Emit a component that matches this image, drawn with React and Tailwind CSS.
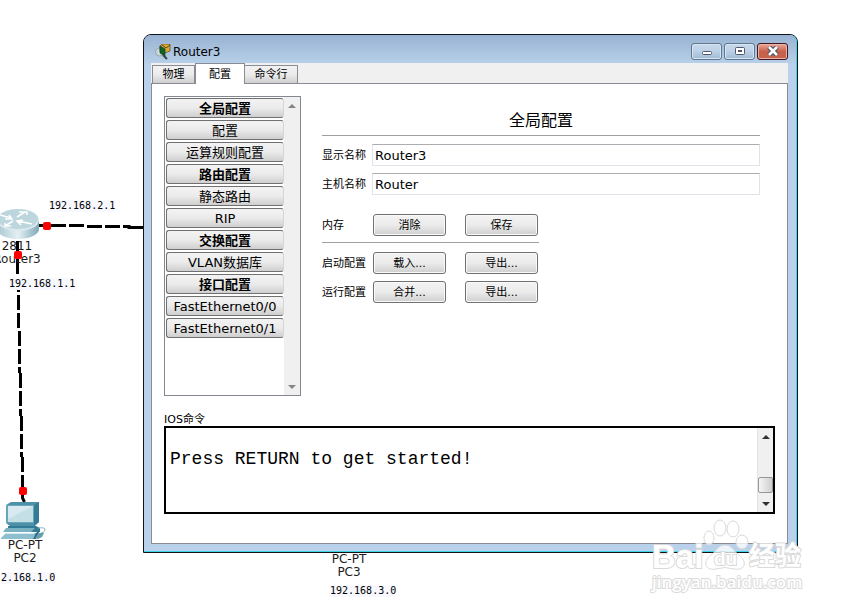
import { useState } from "react";

const SECTIONS = [
  { label: "全局配置", header: true },
  { label: "配置" },
  { label: "运算规则配置" },
  { label: "路由配置", header: true },
  { label: "静态路由" },
  { label: "RIP" },
  { label: "交换配置", header: true },
  { label: "VLAN数据库" },
  { label: "接口配置", header: true },
  { label: "FastEthernet0/0" },
  { label: "FastEthernet0/1" },
];

const FONT = "font-['DejaVu_Sans','Noto_Sans_CJK_SC',sans-serif]";

function Links() {
  return (
    <svg className="absolute left-0 top-0" width="150" height="510" aria-hidden="true">
      <g fill="none" stroke="#000" strokeWidth="3">
        <path d="M39 225.500H66M69 225.500H84M87 226.500H102M105 226.500H120M123 226.500H129V227.500H144" />
        <path d="M17.500 241V274M18.500 289V292" />
        <path d="M18.500 295V328M19.500 331V373M20.500 373V416M21.500 416V457M22.500 457V480" strokeDasharray="15 3" />
        <path d="M22.500 475V498L24.500 502" />
      </g>
    </svg>
  );
}

function Dots() {
  return (
    <svg className="absolute left-0 top-0" width="60" height="510" aria-hidden="true">
      <g fill="#f00">
        <rect x="43" y="222" width="8" height="8" rx="2" />
        <rect x="14" y="251" width="8" height="8" rx="2" />
        <rect x="19" y="487" width="8" height="8" rx="2" />
      </g>
    </svg>
  );
}

function RouterIcon() {
  return (
    <svg className="absolute left-0 top-[208px]" width="40" height="32" viewBox="0 0 40 32" aria-hidden="true">
      <defs>
        <linearGradient id="routerSide" x1="0" x2="1">
          <stop offset="0" stopColor="#a9c6d0" />
          <stop offset=".5" stopColor="#e4f0f4" />
          <stop offset="1" stopColor="#7fa9b8" />
        </linearGradient>
      </defs>
      <path d="M-3 12V21C-3 27 7 31 18 31S39 27 39 21V12Z" fill="url(#routerSide)" />
      <ellipse cx="18" cy="12" rx="21" ry="11" fill="#dbe9ee" />
      <ellipse cx="18" cy="11" rx="20" ry="10" fill="#bdd6de" />
      <g fill="none" stroke="#fff" strokeWidth="1.500">
        <path d="M0 7L11 10M9 7L12 11L5 11M17 9L25 4M19 4H27V7M18 13L32 16M23 12L17 13L21 17M13 13L5 18M5 15V18H11" />
      </g>
    </svg>
  );
}

function PcIcon() {
  return (
    <svg className="absolute left-0 top-[501px]" width="47" height="39" viewBox="0 0 47 39" aria-hidden="true">
      <path d="M6 4L11 1H39V21L35 25H10L6 22Z" fill="#4d91a8" />
      <path d="M6 4H34V22H6Z" fill="#68a6b9" />
      <rect x="8" y="5" width="25" height="16" fill="#c5dfe7" />
      <path d="M8 5H33L8 18Z" fill="#d8eaf0" />
      <path d="M34 4L39 1V21L34 24Z" fill="#367b94" />
      <path d="M8 25H36L40 27V31H8Z" fill="#337b94" />
      <path d="M6 27H35L31 31H3Z" fill="#79b2c2" />
      <path d="M1 37L6 32H37L33 38H1Z" fill="#8dbfce" />
      <path d="M6 32.500H34" stroke="#d8ebf0" />
      <path d="M36 32L40 29L36 38H33Z" fill="#286e87" />
      <path d="M38 27Q46 26 45 29T41 32" fill="none" stroke="#8ab6c4" />
      <path d="M35 37L39 32H44L42 36L38 38Z" fill="#669eae" />
    </svg>
  );
}

function AppIcon() {
  return (
    <svg width="16" height="16" viewBox="0 0 16 16" aria-hidden="true">
      <circle cx="4.500" cy="8" r="4" fill="#c9d8dc" stroke="#95a8b0" />
      <path d="M5 2L7 0H15V7L10 9L5 7Z" fill="#d9a93c" stroke="#5b4612" strokeWidth=".7" />
      <path d="M7 1L11 4L15 1" stroke="#5b4612" fill="none" />
      <path d="M5 2L10 5V12L5 9Z" fill="#0c6524" stroke="#123d1c" strokeWidth=".7" />
      <path d="M8 11L12 15" stroke="#36434a" strokeWidth="2" />
    </svg>
  );
}

function Label({ className, children }) {
  return (
    <span className={`absolute whitespace-pre bg-[#f8f8ff] font-['DejaVu_Sans_Mono',monospace] text-[10px] leading-3 ${className}`}>
      {children}
    </span>
  );
}

function Device({ className, model, name }) {
  return (
    <div className={`absolute w-16 text-center text-xs leading-[13px] text-[#1c1c1c] ${className}`}>
      <div>{model}</div>
      <div>{name}</div>
    </div>
  );
}

function Arrow({ down, light }) {
  return (
    <button aria-label={down ? "向下滚动" : "向上滚动"} className="flex h-[17px] w-full items-center justify-center">
      <svg width="8" height="4" viewBox="0 0 8 4" aria-hidden="true">
        <path d={down ? "M0 0H8L4 4Z" : "M0 4H8L4 0Z"} fill={light ? "#858585" : "#303030"} />
      </svg>
    </button>
  );
}

function PushButton({ children, label }) {
  return (
    <button
      aria-label={label}
      className="h-[22px] w-[73px] rounded-[3px] border border-[#707070] bg-linear-to-b from-[#f3f3f3] from-0% via-[#ebebeb] via-50% to-[#cfcfcf] pt-px text-[11px] leading-5 shadow-[inset_0_0_0_1px_#fafafa]"
    >
      {children}
    </button>
  );
}

function ActionRow({ title, first, second }) {
  return (
    <div className="flex h-[22px] items-center">
      <span className="w-[51px] pt-0.5 text-[11px]">{title}</span>
      <div className="flex gap-[19px]">
        <PushButton label={`${title} ${first}`}>{first}</PushButton>
        <PushButton label={`${title} ${second}`}>{second}</PushButton>
      </div>
    </div>
  );
}

function Field({ id, title, initial }) {
  const [value, setValue] = useState(initial);
  return (
    <div className="flex h-[22px] items-center">
      <label htmlFor={id} className="w-[50px] shrink-0 pt-0.5 text-[11px]">{title}</label>
      <input
        id={id}
        value={value}
        onChange={(e) => setValue(e.target.value)}
        className="h-[22px] min-w-0 flex-1 border border-[#e2e3ea] border-t-[#abadb3] bg-white px-0.5 text-[13px] outline-none"
      />
    </div>
  );
}

function WindowButtons() {
  const glass = "flex h-[17px] w-[31px] items-center justify-center rounded-[3px] border border-[#5f7590] bg-linear-to-b from-[#c8d9eb] from-0% via-[#bdd1e7] via-45% to-[#9fbad6] shadow-[inset_0_0_0_1px_#d9e7f4]";
  return (
    <div className="flex gap-0.5 pt-1">
      <button aria-label="最小化" className={glass}>
        <svg width="12" height="12" aria-hidden="true">
          <rect x="1.500" y="6.500" width="9" height="3" rx="1" fill="#fff" stroke="#535666" />
        </svg>
      </button>
      <button aria-label="最大化" className={glass}>
        <svg width="12" height="12" aria-hidden="true">
          <rect x="1.500" y="2.500" width="9" height="7" rx="1" fill="#fff" stroke="#535666" />
          <rect x="4.500" y="5.500" width="3" height="1" fill="#8fb0d0" stroke="#535666" />
        </svg>
      </button>
      <button
        aria-label="关闭"
        className="flex h-[17px] w-[31px] items-center justify-center rounded-[3px] border border-[#431422] bg-linear-to-b from-[#e9a99c] from-0% via-[#c9604b] via-50% to-[#c4634c] shadow-[inset_0_0_0_1px_#e9b5a9]"
      >
        <svg width="12" height="10" aria-hidden="true">
          <path d="M2 1L10 9M10 1L2 9" stroke="#535666" strokeWidth="5" />
          <path d="M2 1L10 9M10 1L2 9" stroke="#fff" strokeWidth="2.500" />
        </svg>
      </button>
    </div>
  );
}

function Tabs() {
  const idle = "h-[18px] border border-b-0 border-[#898c95] bg-linear-to-b from-[#f2f2f2] from-0% via-[#ebebeb] via-50% to-[#cfcfcf] text-[11px] leading-4";
  return (
    <div role="tablist" className="flex h-5 items-end bg-[#f0f0f0] pl-px">
      <button role="tab" aria-selected="false" className={`w-[43px] pt-px ${idle}`}>物理</button>
      <button role="tab" aria-selected="true" className="z-10 -mb-px h-[21px] w-[50px] border border-b-0 border-[#898c95] bg-white pt-px text-[11px] leading-4">
        配置
      </button>
      <button role="tab" aria-selected="false" className={`w-[53px] border-l-0 pt-px ${idle}`}>命令行</button>
    </div>
  );
}

function SectionList() {
  return (
    <div className="flex h-[300px] w-[137px] shrink-0 border border-[#828790]">
      <ul className="flex min-w-0 flex-1 flex-col gap-0.5 pl-px pt-px">
        {SECTIONS.map((s) => (
          <li key={s.label} className="flex">
            <button
              className={`h-5 w-full whitespace-nowrap rounded-[3px] border border-[#707070] border-r-[#d5d5d5] bg-linear-to-b from-[#f3f3f3] from-0% via-[#ebebeb] via-50% to-[#cfcfcf] pt-px text-[13px] leading-[18px] ${s.header ? "font-bold" : ""}`}
            >
              {s.label}
            </button>
          </li>
        ))}
      </ul>
      <div className="flex w-4 flex-col justify-between bg-[#f0f0f0]">
        <Arrow light />
        <Arrow light down />
      </div>
    </div>
  );
}

function Terminal() {
  return (
    <div className="mt-4">
      <label htmlFor="ios" className="block h-[14px] text-[11px] leading-4">IOS命令</label>
      <div className="flex h-[88px] border-2 border-black">
        <textarea
          id="ios"
          defaultValue={"\nPress RETURN to get started!"}
          className="min-w-0 flex-1 resize-none overflow-hidden px-1 pt-px font-['Liberation_Mono',monospace] text-[18px] leading-5 outline-none"
        />
        <div className="flex w-4 flex-col border-l border-[#e3e3e3] bg-[#f0f0f0]">
          <Arrow />
          <div className="flex-1" />
          <div className="mb-0.5 h-4 rounded-[2px] border border-[#979797] bg-linear-to-r from-[#f5f5f5] to-[#cfcfcf]" />
          <Arrow down />
        </div>
      </div>
    </div>
  );
}

function RouterWindow() {
  return (
    <section className="absolute left-[143px] right-[52px] top-[34px] rounded-t-lg border border-[#101418] bg-[#b9d1ea]">
      <div className="rounded-t-[7px] border-b border-r border-[#3dd5ec] bg-linear-to-b from-[#98b3d2] from-0% to-[#b9d1ea] to-[30px] pb-[7px] pl-[7px] pr-2">
        <header className="flex h-7 items-center justify-between">
          <h1 className="flex items-center gap-0.5 pl-1 pt-1.5 text-xs">
            <AppIcon />
            Router3
          </h1>
          <WindowButtons />
        </header>
        <Tabs />
        <main className="border border-[#898c95] bg-white pb-[29px] pl-3 pr-3 pt-3">
          <div className="flex gap-[21px] pr-[15px]">
            <SectionList />
            <div className="min-w-0 flex-1">
              <h2 className="mt-2.5 h-[30px] border-b border-[#a0a0a0] text-center text-base leading-[30px]">全局配置</h2>
              <div className="mt-2 flex flex-col gap-[7px]">
                <Field id="display-name" title="显示名称" initial="Router3" />
                <Field id="host-name" title="主机名称" initial="Router" />
              </div>
              <div className="mt-[19px] w-[217px]">
                <ActionRow title="内存" first="消除" second="保存" />
                <hr className="mb-[9px] mt-[6px] border-[#a0a0a0]" />
                <div className="flex flex-col gap-[7px]">
                  <ActionRow title="启动配置" first="载入..." second="导出..." />
                  <ActionRow title="运行配置" first="合并..." second="导出..." />
                </div>
              </div>
            </div>
          </div>
          <Terminal />
        </main>
      </div>
    </section>
  );
}

function Watermark() {
  return (
    <svg className="pointer-events-none absolute left-[648px] top-[516px]" width="160" height="80" aria-hidden="true">
      <g fill="#fff" fillOpacity=".75" stroke="#d9d9d9" strokeWidth="1">
        <ellipse cx="61" cy="22" rx="5" ry="7" />
        <ellipse cx="72" cy="12" rx="6" ry="8" />
        <ellipse cx="85" cy="13" rx="6" ry="8" />
        <ellipse cx="94" cy="26" rx="6" ry="7" />
        <path d="M77 29C84 29 85 35 91 39C100 46 97 55 86 53Q77 50 68 53C57 55 54 46 63 39C69 35 70 29 77 29Z" />
      </g>
      <g fill="#fff" stroke="#dadada" strokeWidth="2" paintOrder="stroke" className="font-['Liberation_Sans','Noto_Sans_CJK_SC',sans-serif]">
        <text x="4" y="52" fontSize="33" fontWeight="bold">Bai</text>
        <text x="66" y="49" fontSize="19" fontWeight="bold">du</text>
        <text x="101" y="49" fontSize="26" fontWeight="bold">经验</text>
        <text x="4" y="72" fontSize="17" fontWeight="600" className="font-['Open_Sans',sans-serif]">jingyan.baidu.com</text>
      </g>
    </svg>
  );
}

export default function App() {
  return (
    <div className={`relative min-h-screen overflow-hidden bg-white text-black ${FONT}`}>
      <Links />
      <RouterIcon />
      <PcIcon />
      <Device className="-left-[15px] top-[240px]" model="2811" name="Router3" />
      <Device className="-left-[7px] top-[539px]" model="PC-PT" name="PC2" />
      <Device className="left-[317px] top-[553px]" model="PC-PT" name="PC3" />
      <Dots />
      <Label className="left-[49px] top-[200px]">192.168.2.1</Label>
      <Label className="left-[9px] top-[278px]">192.168.1.1</Label>
      <Label className="left-px top-[572px]">2.168.1.0</Label>
      <Label className="left-[330px] top-[585px]">192.168.3.0</Label>
      <RouterWindow />
      <Watermark />
    </div>
  );
}
